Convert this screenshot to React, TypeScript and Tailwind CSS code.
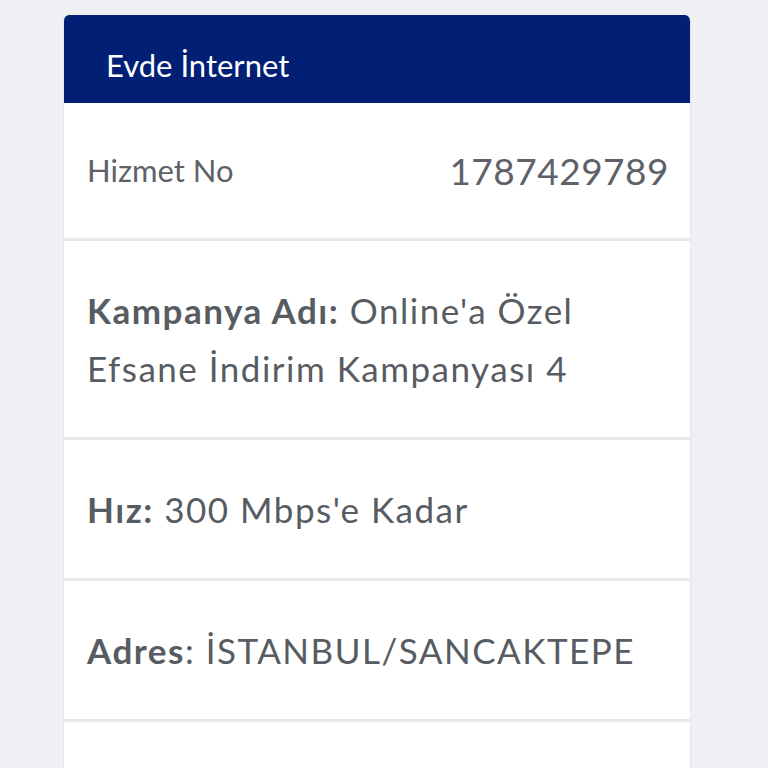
export default function App() {
  const rowText = "text-[#575c63] text-[35px] tracking-[1.5px]";
  return (
    <div className="min-h-[768px] w-[768px] bg-[#eef0f4] pt-[15px] pl-[63px]" style={{ fontFamily: "Lato, 'Noto Sans', sans-serif" }}>
      <div className="w-[628px] rounded-t-[6px] overflow-hidden border-x border-[#e2e4e8] bg-[#e8e9ec]">
        <div className="h-[88px] bg-[#001f75] flex items-center pl-[42px] pt-[12px]">
          <span className="text-white text-[31px] leading-none">Evde İnternet</span>
        </div>
        <div className="flex flex-col gap-[3px]">
          <div className="h-[135px] bg-white flex items-center justify-between pl-[23px] pr-[21px] text-[#5e6268]">
            <span className="text-[31px]">Hizmet No</span>
            <span className="text-[37px] tracking-[0.5px]">1787429789</span>
          </div>
          <div className="h-[196px] bg-white flex items-center pl-[23px] pr-[20px]">
            <p className={`${rowText} leading-[58px]`}>
              <span className="font-bold">Kampanya Adı:</span> Online'a Özel<br />Efsane İndirim Kampanyası 4
            </p>
          </div>
          <div className="h-[138px] bg-white flex items-center pl-[23px]">
            <p className={rowText}>
              <span className="font-bold">Hız:</span> 300 Mbps'e Kadar
            </p>
          </div>
          <div className="h-[138px] bg-white flex items-center pl-[23px]">
            <p className={rowText}>
              <span className="font-bold">Adres</span>: İSTANBUL/SANCAKTEPE
            </p>
          </div>
          <div className="h-[60px] bg-white"></div>
        </div>
      </div>
    </div>
  );
}
